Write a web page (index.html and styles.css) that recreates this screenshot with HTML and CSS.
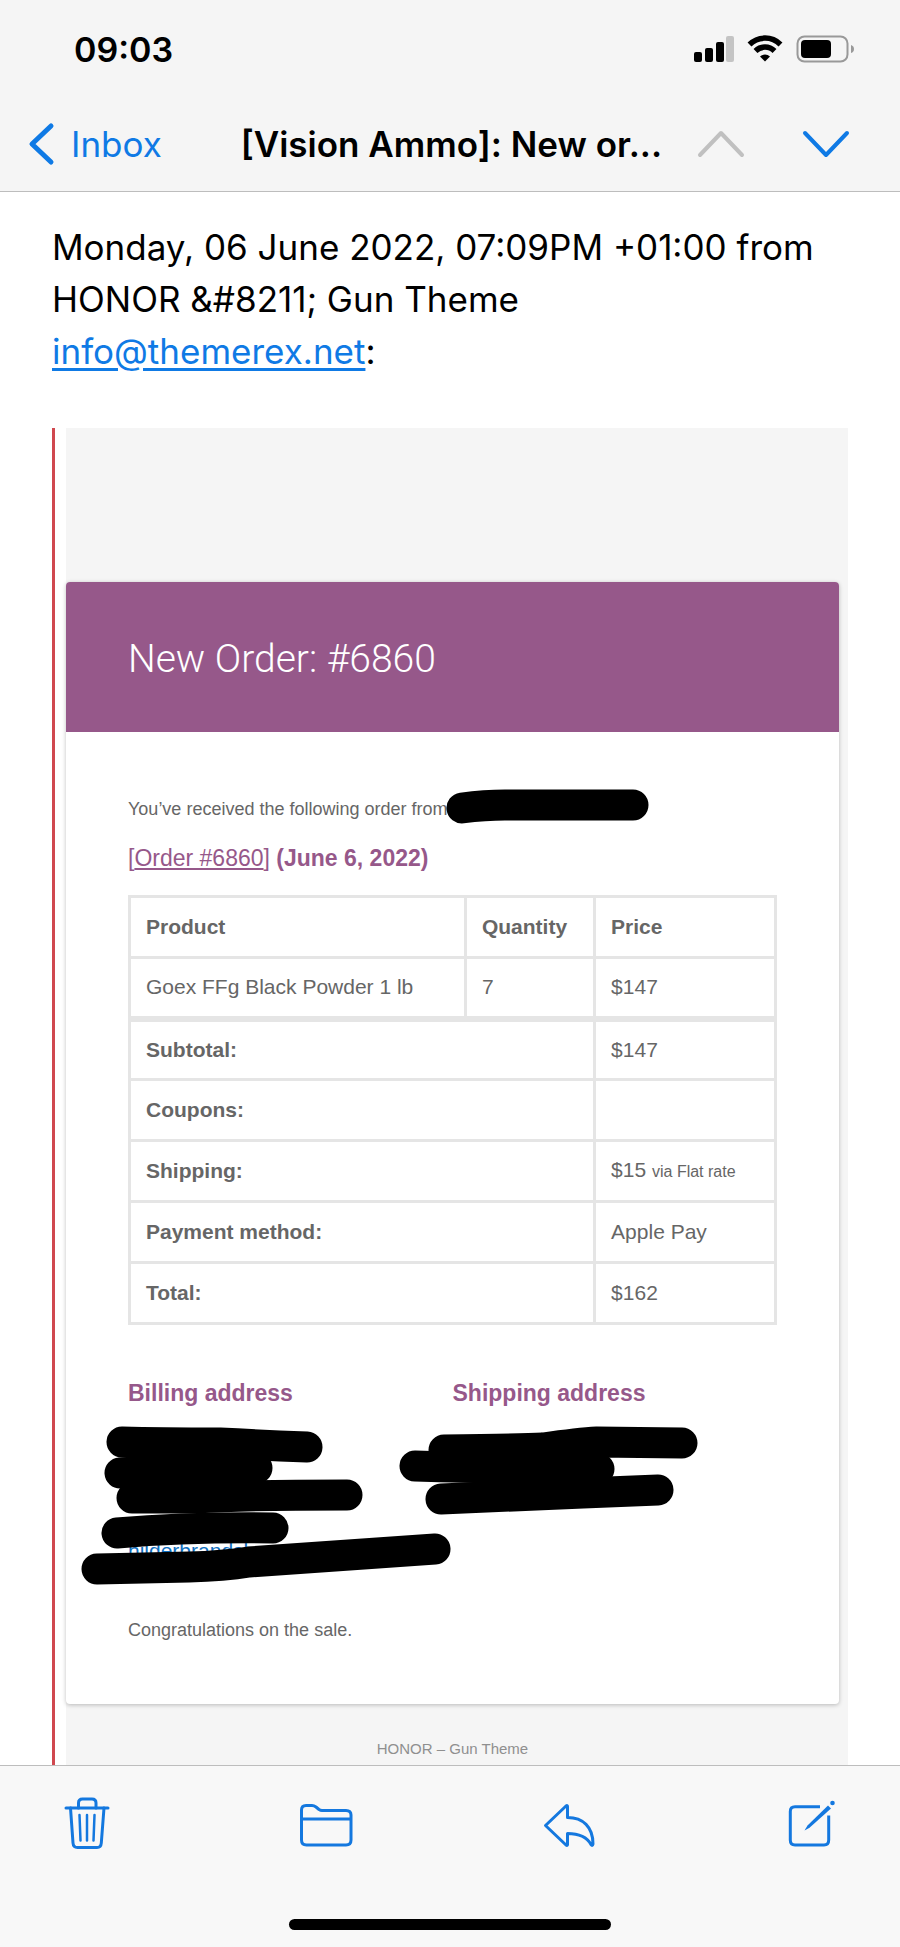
FILE: index.html
```html
<!DOCTYPE html>
<html lang="en">
  <head>
    <meta charset="UTF-8" />
    <meta name="viewport" content="width=device-width, initial-scale=1" />
    <title>[Vision Ammo]: New order</title>
    <link rel="stylesheet" href="styles.css">
  </head>
  <body>
    <header class="top-bar">
      <div class="status-bar">
        <time class="clock">09:03</time>
        <svg class="status-icons" viewBox="0 0 162 28" aria-hidden="true">
          <rect x="1" y="17" width="8" height="10" rx="2"></rect>
          <rect x="12" y="13" width="8" height="14" rx="2"></rect>
          <rect x="23" y="7" width="8" height="20" rx="2"></rect>
          <rect x="33" y="1" width="8" height="26" rx="2" fill="#c4c4c4"></rect>
          <g fill="none" stroke="#000" stroke-width="5.5">
            <path d="M56.5 9.5a22 22 0 0 1 31 0"></path>
            <path d="M62.5 16a13.5 13.5 0 0 1 19 0"></path>
          </g>
          <path d="M67 21.5a7.5 7.5 0 0 1 10 0L72 26.5z"></path>
          <rect x="104.5" y="1.5" width="50" height="25" rx="7" fill="none" stroke="#999" stroke-width="2"></rect>
          <rect x="108" y="5" width="30" height="18" rx="4"></rect>
          <path d="M158 10q3 1 3 4t-3 4z" fill="#999"></path>
        </svg>
      </div>
      <nav class="nav-bar">
        <a class="back-link" href="#inbox">
          <svg viewBox="0 0 24 42" aria-hidden="true">
            <polyline points="22 3 3 21 22 39"></polyline>
          </svg>
          Inbox
        </a>
        <h1 class="nav-title">[Vision Ammo]: New or...</h1>
        <button class="arrow-button" aria-label="Previous message" disabled>
          <svg viewBox="0 0 48 28"><polyline points="3 25 24 3 45 25"></polyline></svg>
        </button>
        <button class="arrow-button" aria-label="Next message">
          <svg viewBox="0 0 48 28"><polyline points="3 3 24 25 45 3"></polyline></svg>
        </button>
      </nav>
    </header>

    <main class="message">
      <p class="quote-intro">
        Monday, 06 June 2022, 07:09PM +01:00 from HONOR &amp;#8211; Gun Theme<br>
        <a href="mailto:info@themerex.net">info@themerex.net</a>:
      </p>

      <blockquote class="quote">
        <div class="email">
          <article class="card">
            <h2 class="card-title">New Order: #6860</h2>
            <div class="card-body">
              <p class="from-line">
                You’ve received the following order from
                <svg class="marker marker-name" viewBox="0 0 206 36" aria-hidden="true">
                  <path d="M17 19Q40 16 60 16L188 16"></path>
                </svg>
              </p>
              <h3 class="order-heading"><a href="#order">[<span>Order #6860</span>]</a> (June 6, 2022)</h3>

              <table class="order-table">
                <colgroup>
                  <col class="col-product">
                  <col class="col-quantity">
                  <col class="col-price">
                </colgroup>
                <thead>
                  <tr><th scope="col">Product</th><th scope="col">Quantity</th><th scope="col">Price</th></tr>
                </thead>
                <tbody>
                  <tr><td>Goex FFg Black Powder 1 lb</td><td>7</td><td>$147</td></tr>
                </tbody>
                <tfoot>
                  <tr><th scope="row" colspan="2">Subtotal:</th><td>$147</td></tr>
                  <tr><th scope="row" colspan="2">Coupons:</th><td></td></tr>
                  <tr><th scope="row" colspan="2">Shipping:</th><td>$15 <small>via Flat rate</small></td></tr>
                  <tr><th scope="row" colspan="2">Payment method:</th><td>Apple Pay</td></tr>
                  <tr><th scope="row" colspan="2">Total:</th><td>$162</td></tr>
                </tfoot>
              </table>

              <section class="addresses">
                <div>
                  <h3>Billing address</h3>
                  <a class="billing-email" href="#email">hilderbrandsl</a>
                </div>
                <div>
                  <h3>Shipping address</h3>
                </div>
                <!-- marker strokes over the addresses -->
                <svg class="marker marker-addresses" viewBox="-1 9 648 220" aria-hidden="true">
                  <path d="M-7 72Q30 73 91 73Q130 75 178 77"></path>
                  <path d="M-9 103Q60 98 128 98"></path>
                  <path d="M3 128L70 128Q110 125 218 125"></path>
                  <path d="M-12 163Q60 157 144 158"></path>
                  <path d="M-32 199L60 197Q95 196 120 192Q190 187 306 179"></path>
                  <path d="M315 80Q390 79 414 78Q450 73 468 72L553 73"></path>
                  <path d="M286 96Q390 99 470 99"></path>
                  <path d="M312 129L454 123L529 120"></path>
                </svg>
              </section>

              <p class="closing">Congratulations on the sale.</p>
            </div>
          </article>
          <p class="credit">HONOR – Gun Theme</p>
        </div>
      </blockquote>
    </main>

    <footer class="bottom-bar">
      <div class="toolbar">
        <button aria-label="Delete">
          <svg viewBox="0 0 60 60">
            <path d="M8 15H50"></path>
            <path d="M20.500 15V10Q20.500 6 24.500 6H34Q38 6 38 10V15"></path>
            <path d="M12.500 15L15 50Q15.300 54.500 19.500 54.500H39Q43 54.500 43.300 50L46 15"></path>
            <path d="M21.500 22L22.500 47.500M29 22V47.500M36.500 22L35.500 47.500" stroke-width="2.500"></path>
          </svg>
        </button>
        <button aria-label="Move to folder">
          <svg viewBox="0 0 60 60">
            <path d="M2.500 47V17Q2.500 12.500 7 12.500H13Q15 12.500 17 14L20 16.500Q21.500 17.500 23 17.500H47Q52 17.500 52 22V47Q52 52 47 52H7.500Q2.500 52 2.500 47ZM2.500 26H52"></path>
          </svg>
        </button>
        <button aria-label="Reply">
          <svg viewBox="0 0 60 60">
            <path d="M4.500 32.500L25 13Q26.500 12 26.500 13.500V24.500C42 24.500 52 34 52 51Q51.500 53.500 50 51.500Q44 40.500 26.500 40.500V51.500Q26.500 53 25 52Z"></path>
          </svg>
        </button>
        <button aria-label="Compose">
          <svg viewBox="0 0 60 60">
            <path d="M38 13.700H13Q8.300 13.700 8.300 18.500V47Q8.300 52 13 52H42Q46.700 52 46.700 47V22.500" stroke-linecap="butt"></path>
            <path class="pencil" d="M46 12.500L25.500 32.500L22.500 37.500L27.500 34.800L49 15.500Z"></path>
            <circle class="pencil" cx="50.500" cy="10" r="2.300"></circle>
          </svg>
        </button>
      </div>
      <div class="home-indicator"></div>
    </footer>
  </body>
</html>
```

FILE: styles.css
```css
* {
  box-sizing: border-box;
  margin: 0;
  padding: 0;
}
body {
  min-height: 100vh;
  display: flex;
  flex-direction: column;
  background: #fff;
  color: #000;
  font-family: Inter, "Liberation Sans", sans-serif;
  font-size: 35px;
}
button {
  border: none;
  background: none;
  cursor: pointer;
}
svg {
  display: block;
  overflow: visible;
}

/* Status and navigation */
.top-bar {
  background: #f5f5f5;
  border-bottom: 1px solid #bdbdbd;
}
.status-bar {
  height: 98px;
  padding: 0 45px 0 74px;
  display: flex;
  justify-content: space-between;
  align-items: center;
}
.clock {
  font-size: 34px;
  font-weight: 600;
}
.status-icons {
  width: 162px;
  height: 28px;
}
.nav-bar {
  height: 93px;
  padding: 0 50px 2px 29px;
  display: flex;
  align-items: center;
}
.back-link {
  display: flex;
  align-items: center;
  gap: 18px;
  color: #0f7ae5;
  text-decoration: none;
}
.back-link svg {
  width: 24px;
  height: 42px;
}
.nav-bar svg {
  fill: none;
  stroke: currentColor;
  stroke-width: 4;
  stroke-linecap: round;
  stroke-linejoin: round;
}
.back-link svg polyline {
  stroke-width: 5;
}
.nav-title {
  flex: 1;
  padding-left: 44px;
  text-align: center;
  font-size: 35px;
  font-weight: 600;
  white-space: nowrap;
}
.arrow-button {
  color: #0f7ae5;
  margin-left: 57px;
}
.arrow-button:disabled {
  color: #c0c0c0;
  margin-left: 0;
}
.arrow-button svg {
  width: 48px;
  height: 28px;
}

/* Message */
.message {
  flex: 1;
  display: flex;
  flex-direction: column;
  padding: 29px 52px 0;
}
.quote-intro {
  line-height: 52px;
  margin-bottom: 51px;
}
.quote-intro a {
  color: #0f7ae5;
  text-underline-offset: 4px;
}
.quote {
  flex: 1;
  display: flex;
  border-left: 3px solid #d0484f;
  padding-left: 11px;
  font-family: "Liberation Sans", Arial, sans-serif;
  color: #666;
}
.email {
  flex: 1;
  background: #f5f5f5;
  padding: 154px 9px 0 0;
}
.card {
  background: #fff;
  border-radius: 4px;
  box-shadow: 0 1px 4px rgba(0, 0, 0, 0.25);
}
.card-title {
  background: #96588a;
  color: #fff;
  border-radius: 4px 4px 0 0;
  padding: 50px 62px 46px;
  font-family: Roboto, "Liberation Sans", sans-serif;
  font-size: 39px;
  font-weight: 300;
  line-height: 54px;
}
.card-body {
  padding: 62px 62px 59px;
}
.from-line,
.closing {
  font-size: 18px;
  line-height: 30px;
}
.from-line {
  position: relative;
  margin-bottom: 20px;
}
.marker {
  position: absolute;
  fill: none;
  stroke: #000;
  stroke-width: 31;
  stroke-linecap: round;
}
.marker-name {
  left: 317px;
  top: -5px;
  width: 206px;
  height: 36px;
}
.order-heading,
.addresses h3 {
  color: #96588a;
  font-size: 23px;
  line-height: 28px;
}
.order-heading {
  margin-bottom: 23px;
}
.order-heading a {
  color: inherit;
  font-weight: normal;
  text-decoration: none;
}
.order-heading span {
  text-decoration: underline;
}

/* Order table */
.order-table {
  width: 100%;
  table-layout: fixed;
  border-collapse: collapse;
  font-size: 21px;
  line-height: 30px;
}
.col-product {
  width: 52%;
}
.col-quantity {
  width: 20%;
}
.col-price {
  width: 28%;
}
.order-table th,
.order-table td {
  height: 61px;
  border: 3px solid #e5e5e5;
  padding: 0 15px;
  text-align: left;
}
.order-table tfoot tr:first-child > * {
  border-top-width: 6px;
}
.order-table small {
  font-size: 16px;
}

/* Addresses */
.addresses {
  position: relative;
  display: grid;
  grid-template-columns: 1fr 1fr;
  margin-top: 54px;
  height: 218px;
}
.billing-email {
  display: block;
  margin-top: 132px;
  color: #0f6fc0;
  font-size: 21px;
  line-height: 24px;
  text-decoration: none;
}
.marker-addresses {
  left: 0;
  top: 0;
  width: 648px;
  height: 220px;
}
.closing {
  margin-top: 18px;
}
.credit {
  padding-top: 34px;
  text-align: center;
  color: #8f8f8f;
  font-size: 15px;
  line-height: 22px;
}

/* Bottom toolbar */
.bottom-bar {
  height: 182px;
  background: #f8f8f8;
  border-top: 1px solid #bdbdbd;
  display: flex;
  flex-direction: column;
  justify-content: space-between;
  padding: 27px 58px 17px;
}
.toolbar {
  display: flex;
  justify-content: space-between;
}
.toolbar svg {
  width: 60px;
  height: 60px;
  fill: none;
  stroke: #1478df;
  stroke-width: 3;
  stroke-linecap: round;
  stroke-linejoin: round;
}
.toolbar .pencil {
  fill: #1478df;
  stroke: none;
}
.home-indicator {
  align-self: center;
  width: 322px;
  height: 11px;
  border-radius: 6px;
  background: #000;
}
```
